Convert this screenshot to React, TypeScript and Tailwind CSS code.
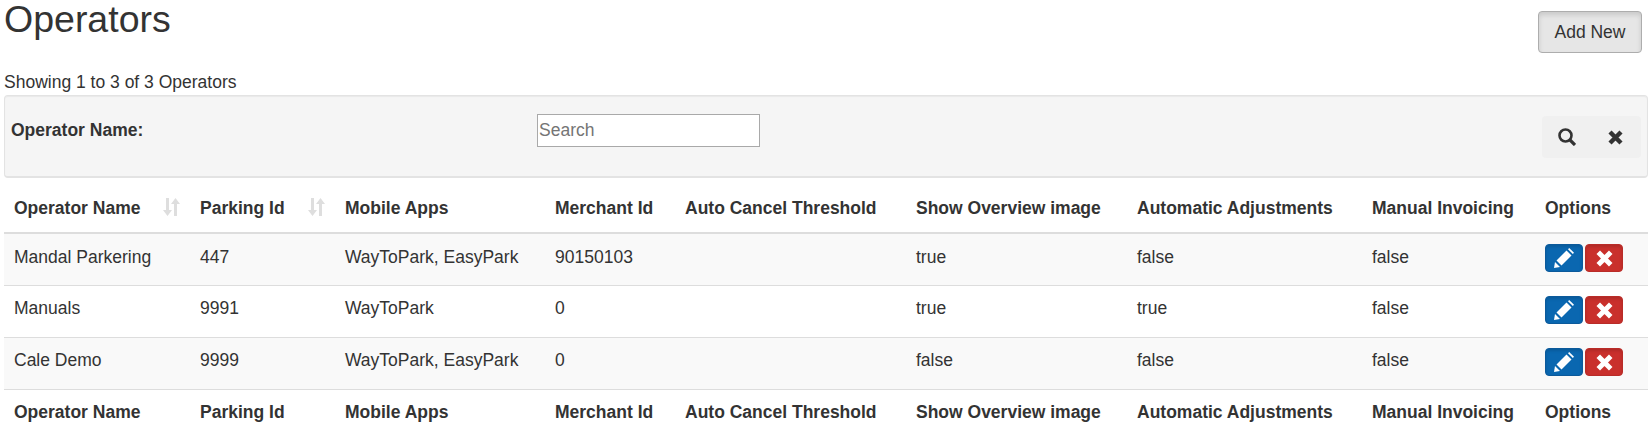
const columns = [
    { label: 'Operator Name', width: 'w-[186px]', sortable: true },
    { label: 'Parking Id', width: 'w-[145px]', sortable: true },
    { label: 'Mobile Apps', width: 'w-[210px]' },
    { label: 'Merchant Id', width: 'w-[130px]' },
    { label: 'Auto Cancel Threshold', width: 'w-[231px]' },
    { label: 'Show Overview image', width: 'w-[221px]' },
    { label: 'Automatic Adjustments', width: 'w-[235px]' },
    { label: 'Manual Invoicing', width: 'w-[173px]' },
    { label: 'Options', width: 'w-[113px]' },
];

const operators = [
    ['Mandal Parkering', '447', 'WayToPark, EasyPark', '90150103', '', 'true', 'false', 'false'],
    ['Manuals', '9991', 'WayToPark', '0', '', 'true', 'true', 'false'],
    ['Cale Demo', '9999', 'WayToPark, EasyPark', '0', '', 'false', 'false', 'false'],
];

function SortIcon() {
    return (
        <svg viewBox="0 0 17 18" className="absolute right-[10px] top-[20px] h-[18px] w-[17px] fill-[#dedede]">
            <path d="M3 0h3v12h3l-4.500 6L0 12h3z" />
            <path d="M11 18h3V6h3l-4.500-6L8 6h3z" />
        </svg>
    );
}

function RemoveIcon({ className }: { className: string }) {
    return (
        <svg viewBox="0 0 15 15" className={className}>
            <path d="M2 2L13 13M13 2L2 13" stroke="currentColor" strokeWidth="4.400" />
        </svg>
    );
}

function SearchIcon() {
    return (
        <svg viewBox="0 0 18 18" className="ml-[16px] h-[18px] w-[18px] text-[#333]" fill="none" stroke="currentColor">
            <circle cx="7.500" cy="7.500" r="6" strokeWidth="2.600" />
            <path d="M11.500 11.500L17 17" strokeWidth="3.200" />
        </svg>
    );
}

function PencilIcon() {
    return (
        <svg viewBox="0 0 20 20" className="h-[20px] w-[20px] fill-white">
            <path d="M0 20l1-6 5 5z" />
            <path d="M2.500 12.500L12.500 2.500L17.500 7.500L7.500 17.500z" />
            <path d="M14 1.200L15.200 0L20 4.800L18.800 6z" />
        </svg>
    );
}

export default function App() {
    return (
        <div className="h-[425px] overflow-hidden bg-white pr-[2px] pl-[4px] font-['Liberation_Sans',Arial,sans-serif] text-[17.5px] text-[#333]">
            <div className="flex items-start justify-between">
                <h1 className="text-[37.5px] leading-[39px]">Operators</h1>
                <button className="mt-[11px] mr-[6px] h-[42px] w-[104px] rounded-[4px] border border-[#adadad] bg-[#e6e6e6] text-[#333] shadow-[inset_0_3px_5px_rgba(0,0,0,0.125)]">
                    Add New
                </button>
            </div>

            <div className="mt-[18px] leading-[22px]">Showing 1 to 3 of 3 Operators</div>

            <div className="mt-[2px] flex h-[83px] rounded-[4px] border border-b-2 border-[#e3e3e3] bg-[#f5f5f5] shadow-[inset_0_1px_1px_rgba(0,0,0,0.05)]">
                <label className="mt-[23px] ml-[6px] w-[526px] font-bold leading-[22px]">Operator Name:</label>
                <input
                    placeholder="Search"
                    className="mt-[18px] h-[33px] w-[223px] border border-[#a9a9a9] bg-white px-[1px] outline-none placeholder:text-[#757575]"
                />
                <div className="mt-[20px] mr-[6px] ml-auto flex h-[42px] w-[99px] items-center rounded-[4px] bg-[#f0f0f0]">
                    <SearchIcon />
                    <RemoveIcon className="ml-[32px] h-[15px] w-[15px] text-[#333]" />
                </div>
            </div>

            <table className="w-full table-fixed border-collapse">
                <thead>
                    <tr className="h-[55px] border-b-2 border-[#ddd]">
                        {columns.map((col) => (
                            <th key={col.label} className={`${col.width} relative px-[10px] pt-[6px] text-left align-middle font-bold whitespace-nowrap`}>
                                {col.label}
                                {col.sortable && <SortIcon />}
                            </th>
                        ))}
                    </tr>
                </thead>
                <tbody>
                    {operators.map((row, i) => (
                        <tr key={row[0]} className={`h-[52px] border-b border-[#ddd] ${i % 2 === 0 ? 'bg-[#f9f9f9]' : 'bg-white'}`}>
                            {row.map((cell, j) => (
                                <td key={j} className="px-[10px] pb-[5px] align-middle whitespace-nowrap">
                                    {cell}
                                </td>
                            ))}
                            <td className="px-[10px] pb-[2px] align-middle">
                                <div className="flex gap-[2px]">
                                    <button className="flex h-[28px] w-[38px] items-center justify-center rounded-[4px] border border-[#0c5a9b] bg-[#0a67b0] shadow-[inset_0_2px_3px_rgba(0,0,0,0.125)]">
                                        <PencilIcon />
                                    </button>
                                    <button className="flex h-[28px] w-[38px] items-center justify-center rounded-[4px] border border-[#b92c28] bg-[#c9302c] shadow-[inset_0_2px_3px_rgba(0,0,0,0.125)]">
                                        <RemoveIcon className="h-[17px] w-[17px] text-white" />
                                    </button>
                                </div>
                            </td>
                        </tr>
                    ))}
                </tbody>
                <tfoot>
                    <tr className="h-[46px]">
                        {columns.map((col) => (
                            <th key={col.label} className="px-[10px] text-left align-middle font-bold whitespace-nowrap">
                                {col.label}
                            </th>
                        ))}
                    </tr>
                </tfoot>
            </table>
        </div>
    );
}
